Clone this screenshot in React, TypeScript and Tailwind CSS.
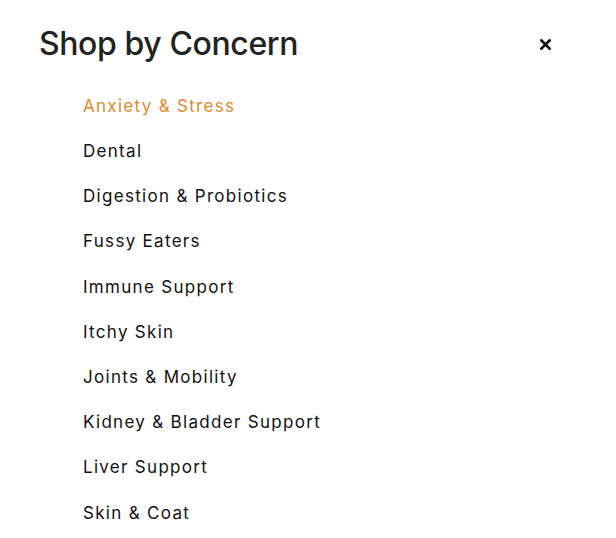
import { X } from 'lucide-react'

const concerns = [
  'Anxiety & Stress',
  'Dental',
  'Digestion & Probiotics',
  'Fussy Eaters',
  'Immune Support',
  'Itchy Skin',
  'Joints & Mobility',
  'Kidney & Bladder Support',
  'Liver Support',
  'Skin & Coat',
]

export default function App() {
  return (
    <div className="w-[616px] h-[538px] bg-white overflow-hidden" style={{ fontFamily: 'Inter, "Liberation Sans", sans-serif' }}>
      <div className="flex items-center justify-between pl-[39px] pr-[62px] pt-[22px]">
        <h1 className="text-[32px] leading-[44px] font-medium text-[#222] tracking-[-0.4px]">Shop by Concern</h1>
        <button className="text-[#111]">
          <X className="w-[17px] h-[17px]" strokeWidth={3.5} />
        </button>
      </div>
      <ul className="pl-[83px] pt-[18px] flex flex-col">
        {concerns.map((c, i) => (
          <li
            key={c}
            className={`h-[45.2px] flex items-center text-[17px] tracking-[1.3px] ${i === 0 ? 'text-[#e08a2c]' : 'text-[#111]'}`}
          >
            {c}
          </li>
        ))}
      </ul>
    </div>
  )
}
